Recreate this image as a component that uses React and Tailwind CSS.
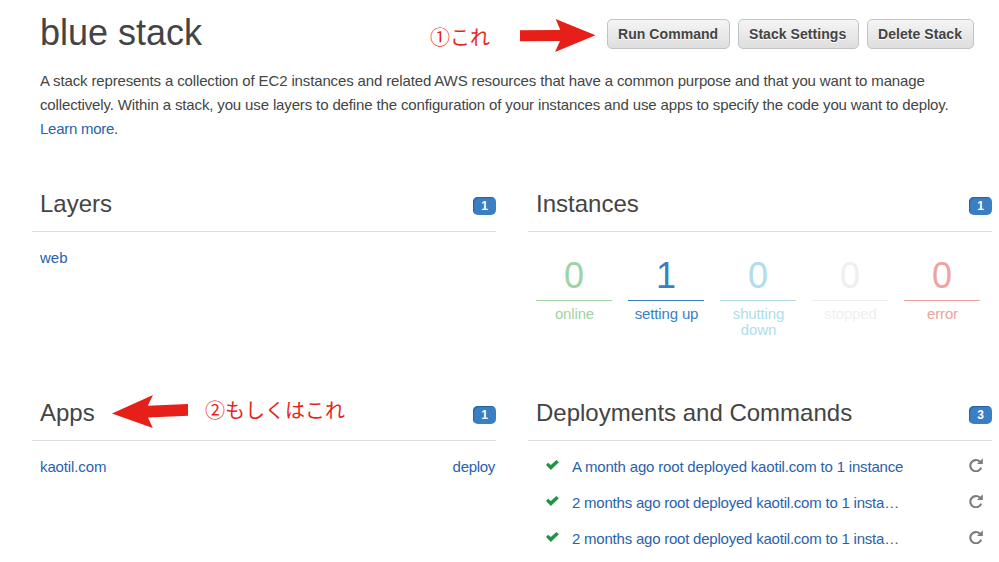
const stats = [
  { value: 0, label: 'online', color: 'text-[#9fd3a3] border-[#9fd3a3]' },
  { value: 1, label: 'setting up', color: 'text-[#3a7fc4] border-[#3a7fc4]' },
  { value: 0, label: 'shutting down', color: 'text-[#b0dceb] border-[#b0dceb]' },
  { value: 0, label: 'stopped', color: 'text-[#efefef] border-[#efefef]' },
  { value: 0, label: 'error', color: 'text-[#eda49e] border-[#eda49e]' },
];

const commands = [
  { text: 'A month ago root deployed kaotil.com to 1 instance', tracking: 'tracking-[-0.18px]' },
  { text: '2 months ago root deployed kaotil.com to 1 insta…', tracking: 'tracking-[-0.22px]' },
  { text: '2 months ago root deployed kaotil.com to 1 insta…', tracking: 'tracking-[-0.22px]' },
];

function Button({ children, width }) {
  return (
    <button
      className={`${width} h-[30px] rounded-[5px] border border-[#c3c3c3] bg-linear-to-b from-[#f5f5f5] to-[#dedede] pl-[10px] text-left text-[14px] leading-[28px] font-bold tracking-[0.06px] whitespace-nowrap text-[#444] [text-shadow:0_1px_0_#fff]`}
    >
      {children}
    </button>
  );
}

function Badge({ children }) {
  return (
    <span className="mt-[3px] h-[18px] w-[23px] rounded-[5px] bg-[#3a7fc4] text-center text-[12px] leading-[18px] font-bold text-white shadow-[inset_1px_1px_1px_#2460a4]">
      {children}
    </span>
  );
}

function Section({ title, count, children }) {
  return (
    <section className="w-[464px]">
      <header className="flex h-[38px] items-start justify-between border-b border-[#dddddd] pl-2">
        <h2 className="mt-[-6px] text-[24px] leading-[32px] text-[#444]">{title}</h2>
        <Badge>{count}</Badge>
      </header>
      {children}
    </section>
  );
}

function Check() {
  return (
    <svg className="mt-[5px] h-[10px] w-[13px]" viewBox="0 0 13 10">
      <path d="M0 5 2.2 2.7 4.8 4.9 10.4 0 12.8 2.2 4.9 9.9Z" fill="#1d9641" />
    </svg>
  );
}

function Reload() {
  return (
    <svg className="mt-[3px] h-[14px] w-[14px]" viewBox="0 0 14 14">
      <path d="M10.8 3.6A5.6 5.6 0 1 0 12.2 9.6" fill="none" stroke="#7b7b7b" strokeWidth="2.1" />
      <path d="M13.8 .2V6H8Z" fill="#7b7b7b" />
    </svg>
  );
}

export default function App() {
  return (
    <div className="relative h-[562px] w-[999px] overflow-hidden bg-white font-['Liberation_Sans',Arial,sans-serif] text-[15px] text-[#444]">
      <div className="flex items-start justify-between pr-[25px] pl-10">
        <h1 className="mt-[13px] text-[36px] leading-[40px]">blue stack</h1>
        <div className="mt-[19px] flex gap-2">
          <Button width="w-[123px]">Run Command</Button>
          <Button width="w-[121px]">Stack Settings</Button>
          <Button width="w-[107px]">Delete Stack</Button>
        </div>
      </div>
      <p className="mt-4 pl-10 leading-[24px] tracking-[-0.138px] whitespace-nowrap">
        A stack represents a collection of EC2 instances and related AWS resources that have a common purpose and that you want to manage
        <br />
        collectively. Within a stack, you use layers to define the configuration of your instances and use apps to specify the code you want to deploy.
        <br />
        <span className="tracking-[-0.27px]">
          <a className="text-[#2a62ac]">Learn more</a>.
        </span>
      </p>

      <div className="mt-[53px] ml-8 grid w-[960px] grid-cols-[464px_464px] grid-rows-[209px_auto] gap-x-8 text-[#2a62ac]">
        <Section title="Layers" count={1}>
          <div className="mt-[14px] pl-2 leading-[24px]">web</div>
        </Section>
        <Section title="Instances" count={1}>
          <div className="mt-[22px] flex gap-4 pl-2">
            {stats.map((s) => (
              <div key={s.label} className={`w-[76px] text-center ${s.color}`}>
                <div className="h-[47px] border-b border-inherit text-[36px] leading-[44px]">{s.value}</div>
                <div className="mt-[5px] pl-px leading-[16px] tracking-[-0.15px]">{s.label}</div>
              </div>
            ))}
          </div>
        </Section>
        <Section title="Apps" count={1}>
          <div className="mt-[14px] flex justify-between pr-px pl-2 leading-[24px]">
            <span className="tracking-[-0.12px]">kaotil.com</span>
            <span className="tracking-[-0.3px]">deploy</span>
          </div>
        </Section>
        <Section title="Deployments and Commands" count={3}>
          <div className="mt-[14px] flex flex-col gap-3 pr-[9px] pl-[18px]">
            {commands.map((c, i) => (
              <div key={i} className="flex h-6 items-start leading-[24px]">
                <Check />
                <span className={`ml-[13px] grow whitespace-nowrap ${c.tracking}`}>{c.text}</span>
                <Reload />
              </div>
            ))}
          </div>
        </Section>
      </div>

      <div className="absolute top-[23px] left-[430px] font-['Noto_Sans_CJK_JP',sans-serif] text-[20px] leading-[28px] whitespace-nowrap text-[#e71f19]">
        ①これ
      </div>
      <svg className="absolute top-[19px] left-[520px] h-[33px] w-[76px]" viewBox="0 0 76 33">
        <path d="M0 11.2 40.3 11 35.7 0 75.5 16.3 35 33 40 22 0 22.3Z" fill="#e71f19" />
      </svg>
      <div className="absolute top-[396px] left-[205px] font-['Noto_Sans_CJK_JP',sans-serif] text-[20px] leading-[28px] whitespace-nowrap text-[#e71f19]">
        ②もしくはこれ
      </div>
      <svg className="absolute top-[395px] left-[112px] h-[33px] w-[76px]" viewBox="0 0 76 33">
        <path d="M76 9 35.8 10.8 41 0 0 18.5 40.8 33 36 22.4 76 20.7Z" fill="#e71f19" />
      </svg>
    </div>
  );
}
